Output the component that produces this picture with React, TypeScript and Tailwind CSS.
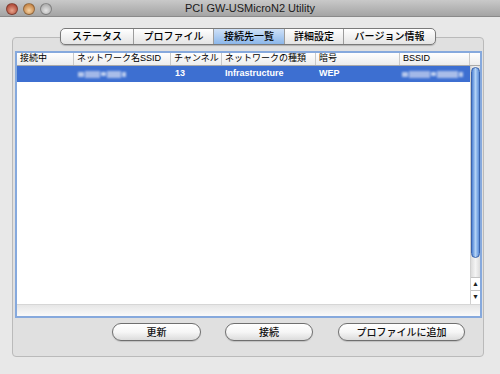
import React from 'react'

const tabs = [
    { label: 'ステータス', w: 'w-[72px]' },
    { label: 'プロファイル', w: 'w-[80px]' },
    { label: '接続先一覧', w: 'w-[71px]', active: true },
    { label: '詳細設定', w: 'w-[59px]' },
    { label: 'バージョン情報', w: 'w-[92px]' },
]

const columns = [
    { label: '接続中', w: 'w-[57px]' },
    { label: 'ネットワーク名SSID', w: 'w-[97px]' },
    { label: 'チャンネル', w: 'w-[51px]' },
    { label: 'ネットワークの種類', w: 'w-[94px]' },
    { label: '暗号', w: 'w-[84px]' },
    { label: 'BSSID', w: 'w-[70px]' },
]

// pixelated placeholder for hidden ssid / mac
function Blur({ w }: { w: string }) {
    return (
        <div className={`flex h-[7px] items-center gap-[1px] opacity-75 blur-[1.2px] ${w}`}>
            <div className="h-[5px] w-[6px] bg-[#dfe6f6]" />
            <div className="h-[7px] flex-1 bg-[#c4d1f0]" />
            <div className="h-[4px] w-[5px] bg-[#eef2fa]" />
            <div className="h-[7px] flex-1 bg-[#cdd8f2]" />
            <div className="h-[5px] w-[4px] bg-[#e6ecf8]" />
        </div>
    )
}

function Light({ color }: { color: string }) {
    return <div className={`h-[12px] w-[12px] rounded-full border border-black/30 ${color}`} />
}

function Button({ label, w }: { label: string; w: string }) {
    return (
        <button
            type="button"
            className={`flex h-[18px] items-center justify-center rounded-full border border-[#6f6f6f] bg-gradient-to-b from-white via-[#f6f6f6] to-[#dcdcdc] text-[10px] font-medium text-[#111] shadow-[0_1px_1px_rgba(0,0,0,0.15)] ${w}`}
        >
            {label}
        </button>
    )
}

export default function App() {
    return (
        <div
            className="flex h-[374px] w-[500px] flex-col overflow-hidden bg-[#e8e8e8] text-black"
            style={{ fontFamily: '"Liberation Sans", "Noto Sans CJK JP", sans-serif' }}
        >
            {/* title bar */}
            <div className="grid h-[17px] grid-cols-[1fr_auto_1fr] items-center border-b border-[#8a8a8a] bg-gradient-to-b from-[#c9c9c9] to-[#a4a4a4]">
                <div className="flex gap-[5px] pl-[6px] pt-[2px]">
                    <Light color="bg-[radial-gradient(circle_at_50%_65%,#e9a58c,#b3503e_70%)]" />
                    <Light color="bg-[radial-gradient(circle_at_50%_65%,#f6d3a4,#c98a4c_70%)]" />
                    <Light color="bg-[radial-gradient(circle_at_50%_65%,#e4e4e4,#b2b2b2_70%)]" />
                </div>
                <div className="text-[11px] text-[#1a1a1a]">PCI GW-USMicroN2 Utility</div>
                <div />
            </div>

            <div className="flex flex-1 flex-col pt-[11px]">
                {/* tabs */}
                <div className="relative z-10 ml-[60px] flex h-[17px] w-fit overflow-hidden rounded-[5px] border border-[#7a7a7a] bg-gradient-to-b from-white to-[#e4e4e4] shadow-[0_1px_1px_rgba(0,0,0,0.2)]">
                    {tabs.map((t, i) => (
                        <div
                            key={t.label}
                            className={`flex items-center justify-center text-[10px] font-medium ${t.w} ${i > 0 ? 'border-l border-[#9c9c9c]' : ''} ${t.active ? 'bg-gradient-to-b from-[#cfe1f7] to-[#8cb7ea]' : ''}`}
                        >
                            {t.label}
                        </div>
                    ))}
                </div>

                {/* panel */}
                <div className="-mt-[8px] ml-[12px] flex h-[320px] w-[472px] flex-col rounded-[4px] border border-[#bababa] bg-[#e0e0e0] pl-[2px] pr-[1px] pt-[13px]">
                    <div className="flex h-[267px] flex-col border-2 border-[#86a9dd] bg-white">
                        {/* header */}
                        <div className="flex h-[13px] border-b border-[#a9a9a9] bg-gradient-to-b from-white to-[#ededed] text-[9px]">
                            {columns.map((c) => (
                                <div key={c.label} className={`flex items-center border-r border-[#c9c9c9] pl-[3px] ${c.w}`}>
                                    {c.label}
                                </div>
                            ))}
                            <div className="flex-1" />
                        </div>

                        <div className="flex flex-1">
                            <div className="flex-1">
                                <div className="flex h-[16px] items-center bg-[#3d6fd1] text-[9px] font-bold text-white">
                                    <div className="w-[57px]" />
                                    <div className="w-[97px] pl-[4px]">
                                        <Blur w="w-[48px]" />
                                    </div>
                                    <div className="w-[51px] pl-[4px]">13</div>
                                    <div className="w-[94px] pl-[3px]">Infrastructure</div>
                                    <div className="w-[84px] pl-[3px]">WEP</div>
                                    <div className="w-[70px] pl-[2px]">
                                        <Blur w="w-[61px]" />
                                    </div>
                                </div>
                            </div>

                            {/* scrollbar */}
                            <div className="flex w-[10px] flex-col border-l border-[#d0d0d0] bg-gradient-to-r from-[#dcdcdc] via-[#f4f4f4] to-[#dcdcdc]">
                                <div className="mt-[1px] h-[191px] rounded-full border border-[#3a64ad] bg-gradient-to-r from-[#4f82d3] via-[#b3d3f6] to-[#5d8fd9]" />
                                <div className="flex-1" />
                                <div className="flex h-[13px] items-center justify-center border-t border-[#c4c4c4] bg-white text-[7px] text-[#222]">
                                    ▲
                                </div>
                                <div className="flex h-[14px] items-center justify-center border-t border-[#c4c4c4] bg-white text-[7px] text-[#222]">
                                    ▼
                                </div>
                            </div>
                        </div>

                        <div className="h-[12px] border-t border-[#d6d6d6] bg-gradient-to-b from-[#e6e6e6] to-[#fafafa]" />
                    </div>

                    {/* buttons */}
                    <div className="mt-[5px] flex pl-[97px]">
                        <Button label="更新" w="w-[89px]" />
                        <div className="w-[24px]" />
                        <Button label="接続" w="w-[88px]" />
                        <div className="w-[25px]" />
                        <Button label="プロファイルに追加" w="w-[127px]" />
                    </div>
                </div>
            </div>
        </div>
    )
}
